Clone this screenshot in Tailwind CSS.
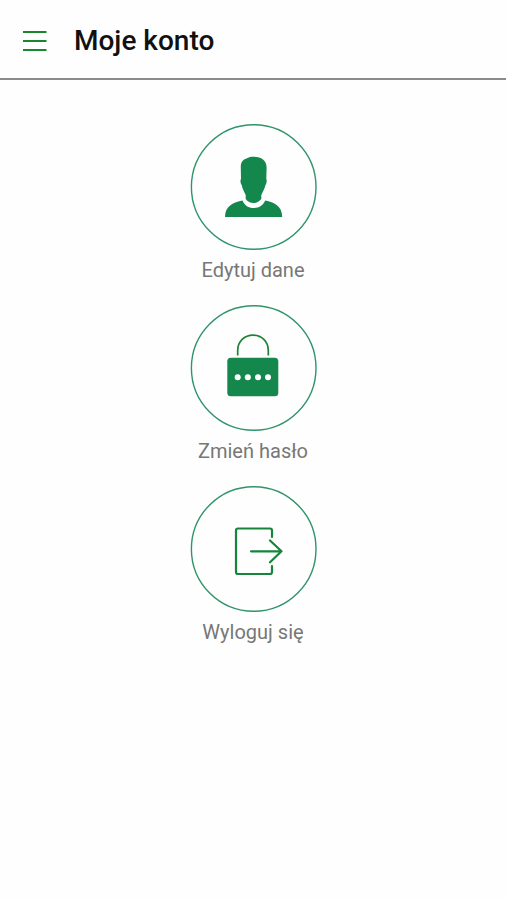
<!DOCTYPE html>
<html lang="pl">
<head>
<meta charset="utf-8">
<meta name="viewport" content="width=device-width, initial-scale=1">
<title>Moje konto</title>
<script src="https://cdn.jsdelivr.net/npm/@tailwindcss/browser@4"></script>
</head>
<body class="min-h-screen bg-[#fefefe] font-[Roboto,sans-serif]">
<header class="flex items-center gap-[27px] border-b-2 border-[#8b8b8b] px-[23px] pt-5 pb-[17px]">
  <button type="button" aria-label="Menu" class="shrink-0">
    <svg class="block h-6 w-6" viewBox="0 0 24 24" fill="none" stroke="#17862c" stroke-width="2.2"><path d="M0 3H23.5M0 12H23.5M0 21H23.5"/></svg>
  </button>
  <h1 class="text-[28px] leading-[41px] font-medium text-[#111]">Moje konto</h1>
</header>
<main class="flex flex-col items-center gap-[21px] pt-[43px]">
  <a href="#edytuj" class="flex flex-col items-center gap-[7px]">
    <svg class="block size-32" viewBox="0 0 128 128" fill="#14874d" aria-hidden="true">
      <circle cx="64.7" cy="64" r="62.3" fill="none" stroke="#2f946a" stroke-width="1.4"/>
      <path d="M51.800 45C51.500 39 54 36.500 57.500 35.500C59.500 34.200 62 33.800 65 33.800C72.500 34 77.800 37.500 77.600 45L77.300 56C78.200 57 77.500 61 76.500 62C75.500 66 73.500 69.500 72.300 72V76C70.500 78.500 67.500 80 64.500 80C61.500 80 58.500 78.500 56.700 76V72C55.500 69.500 53.500 66 52.700 62C51.500 61 51 57 52 56Z"/>
      <path d="M53.500 77.500C55.500 82.500 59.500 85 64.700 85C70 85 74 82.500 76.200 77.500C85 79.500 93 82.500 93.200 94H36C36.200 82.500 44.500 79.500 53.500 77.500Z"/>
    </svg>
    <span class="text-[20px] leading-[25px] text-[#777]">Edytuj dane</span>
  </a>
  <a href="#haslo" class="flex flex-col items-center gap-[7px]">
    <svg class="block size-32" viewBox="0 0 128 128" aria-hidden="true">
      <circle cx="64.7" cy="64" r="62.3" fill="none" stroke="#2f946a" stroke-width="1.4"/>
      <path d="M48.700 51.500V46.500C48.700 37.500 55.500 31.200 64 31.200S79.300 37.500 79.300 46.500V51.500" fill="none" stroke="#1b8532" stroke-width="1.7"/>
      <rect x="38.300" y="53.700" width="51" height="38.500" rx="3.500" fill="#14874d"/>
      <g fill="#fff"><circle cx="48.700" cy="73.200" r="3"/><circle cx="58.800" cy="73.200" r="3"/><circle cx="69" cy="73.200" r="3"/><circle cx="79" cy="73.200" r="3"/></g>
    </svg>
    <span class="text-[20px] leading-[25px] text-[#777]">Zmień hasło</span>
  </a>
  <a href="#wyloguj" class="flex flex-col items-center gap-[7px]">
    <svg class="block size-32" viewBox="0 0 128 128" fill="none" stroke-linecap="round" stroke-linejoin="round" aria-hidden="true">
      <circle cx="64.7" cy="64" r="62.3" stroke="#2f946a" stroke-width="1.4"/>
      <g stroke="#14853a" stroke-width="2.2">
        <path d="M83 52V45.500Q83 43.500 81 43.500H49Q47 43.500 47 45.500V87Q47 89 49 89H81Q83 89 83 87V81"/>
        <path d="M62 66.300H92.500M81 55.500L92.500 66.300L81 77.300"/>
      </g>
    </svg>
    <span class="text-[20px] leading-[25px] text-[#777]">Wyloguj się</span>
  </a>
</main>
</body>
</html>
